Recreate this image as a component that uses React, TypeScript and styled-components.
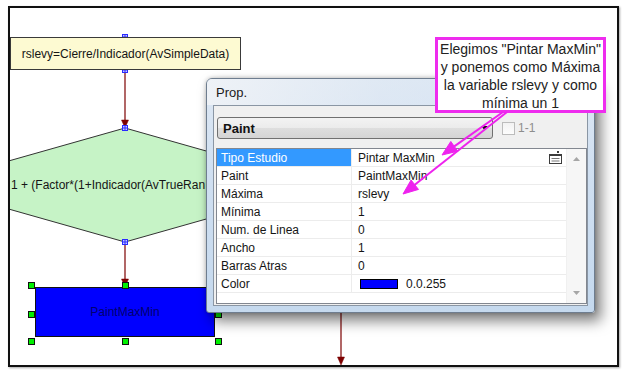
import React from 'react';
import styled, { createGlobalStyle } from 'styled-components';

const GlobalStyle = createGlobalStyle`
  html, body {
    margin: 0;
    padding: 0;
    background: #fff;
  }
  body {
    font-family: 'Liberation Sans', Arial, sans-serif;
  }
`;

const Page = styled.div`
  width: 626px;
  height: 375px;
  box-sizing: border-box;
  padding: 6px 0 0 8px;
  background: #fff;
  overflow: hidden;
`;

// the diagram canvas, its nodes sit at their own coordinates
const Frame = styled.div`
  position: relative;
  width: 611px;
  height: 361px;
  box-sizing: border-box;
  border: 2px solid #111;
  box-shadow: 1px 1px 2px rgba(0, 0, 0, 0.35);
  background: #fff;
  overflow: hidden;
`;

const Layer = styled.svg<{ $top?: boolean }>`
  position: absolute;
  left: 0;
  top: 0;
  width: 607px;
  height: 357px;
  pointer-events: none;
  z-index: ${(p) => (p.$top ? 3 : 0)};
`;

const Node = styled.div<{ $x: number; $y: number; $w: number; $h: number }>`
  position: absolute;
  left: ${(p) => p.$x}px;
  top: ${(p) => p.$y}px;
  width: ${(p) => p.$w}px;
  height: ${(p) => p.$h}px;
  box-sizing: border-box;
  display: flex;
  align-items: center;
  justify-content: center;
  font-size: 12px;
  white-space: nowrap;
  z-index: 1;
`;

const AssignNode = styled(Node)`
  background: #fdfad2;
  border: 1px solid #3a3a3a;
  color: #151515;
`;

const PaintNode = styled(Node)`
  background: #0000ff;
  border: 1px solid #111;
  color: #00006e;
`;

const DecisionLabel = styled(Node)`
  justify-content: flex-start;
  color: #151515;
`;

const Handle = styled.span<{ $x: number; $y: number }>`
  position: absolute;
  left: ${(p) => p.$x - 3}px;
  top: ${(p) => p.$y - 3}px;
  width: 7px;
  height: 7px;
  box-sizing: border-box;
  background: #00f000;
  border: 1px solid #111;
  z-index: 1;
`;

// property window
const Window = styled.div`
  position: absolute;
  left: 196px;
  top: 70px;
  width: 389px;
  height: 235px;
  box-sizing: border-box;
  display: flex;
  flex-direction: column;
  border: 1px solid #6e7d8f;
  border-radius: 6px 6px 3px 3px;
  background: linear-gradient(180deg, #dde7f3 0%, #cfdff1 45%, #c5d9ee 100%);
  box-shadow: 6px 8px 14px rgba(0, 0, 0, 0.5), 0 0 4px rgba(0, 0, 0, 0.25);
  z-index: 2;
`;

const TitleBar = styled.div`
  height: 26px;
  display: flex;
  align-items: center;
  padding: 0 9px;
  font-size: 13px;
  color: #1a1a1a;
  border-radius: 5px 5px 0 0;
  background: linear-gradient(100deg, rgba(240, 243, 247, 0.9) 0%, rgba(225, 234, 244, 0.5) 45%, rgba(200, 222, 246, 0.3) 100%);
`;

const Client = styled.div`
  flex: 1;
  margin: 0 6px 6px;
  box-sizing: border-box;
  border: 1px solid #8a96a4;
  background: #f0f0f0;
  display: flex;
  flex-direction: column;
  gap: 9px;
  padding: 11px 0 1px 2px;
`;

const Toolbar = styled.div`
  height: 22px;
  display: flex;
  align-items: center;
`;

const Select = styled.div`
  width: 276px;
  height: 22px;
  margin-left: 1px;
  box-sizing: border-box;
  border: 1px solid #707070;
  border-radius: 3px;
  background: linear-gradient(180deg, #f3f3f3 0%, #ebebeb 50%, #dedede 51%, #d4d4d4 100%);
  display: flex;
  align-items: center;
  justify-content: space-between;
  padding: 0 4px 0 5px;
  font-size: 13px;
  font-weight: bold;
  color: #111;
`;

const CheckBox = styled.span`
  width: 13px;
  height: 13px;
  margin-left: 9px;
  box-sizing: border-box;
  border: 1px solid #bcbcbc;
  background: linear-gradient(180deg, #f2f2f2, #fdfdfd);
`;

const CheckLabel = styled.span`
  margin-left: 3px;
  font-size: 12px;
  color: #8d8d8d;
`;

const PropGrid = styled.div`
  flex: 1;
  display: flex;
  border: 1px solid #828790;
  background: #fff;
`;

const Rows = styled.div`
  flex: 1;
  display: flex;
  flex-direction: column;
`;

const Row = styled.div`
  height: 18px;
  box-sizing: border-box;
  display: grid;
  grid-template-columns: 135px 1fr;
  border-bottom: 1px solid #ececec;
  font-size: 12px;
  color: #141414;
`;

const NameCell = styled.div<{ $selected?: boolean }>`
  display: flex;
  align-items: center;
  padding-left: 4px;
  border-right: 1px solid #ececec;
  background: ${(p) => (p.$selected ? '#3399ff' : 'transparent')};
  color: ${(p) => (p.$selected ? '#fff' : 'inherit')};
`;

const ValueCell = styled.div`
  display: flex;
  align-items: center;
  justify-content: space-between;
  padding: 0 4px 0 6px;
`;

const ColorValue = styled.span`
  display: flex;
  align-items: center;
  gap: 8px;
`;

const Swatch = styled.span`
  width: 38px;
  height: 10px;
  margin-left: 2px;
  box-sizing: border-box;
  border: 1px solid #000;
  background: #0000ff;
`;

const ScrollBar = styled.div`
  width: 19px;
  background: #f6f6f6;
  border-left: 1px solid #f0f0f0;
  display: flex;
  flex-direction: column;
  justify-content: space-between;
`;

const ScrollButton = styled.div`
  height: 20px;
  display: flex;
  align-items: center;
  justify-content: center;
`;

// annotation
const Callout = styled.div`
  position: absolute;
  left: 425px;
  top: 29px;
  width: 171px;
  height: 76px;
  box-sizing: border-box;
  border: 3px solid #ee2cee;
  background: #fff;
  font-size: 14px;
  line-height: 18px;
  text-align: center;
  color: #222;
  white-space: nowrap;
  z-index: 3;
`;

const rows: { name: string; value: string }[] = [
  { name: 'Tipo Estudio', value: 'Pintar MaxMin' },
  { name: 'Paint', value: 'PaintMaxMin' },
  { name: 'Máxima', value: 'rslevy' },
  { name: 'Mínima', value: '1' },
  { name: 'Num. de Linea', value: '0' },
  { name: 'Ancho', value: '1' },
  { name: 'Barras Atras', value: '0' },
  { name: 'Color', value: '0.0.255' },
];

const handles = [
  [21, 277], [115, 277], [208, 277],
  [21, 306], [208, 306],
  [21, 333], [115, 333], [208, 333],
];

const Port = ({ x, y }: { x: number; y: number }) => (
  <g stroke="#2a2aff" strokeWidth="1" fill="#c8c8ff">
    <rect x={x - 2.5} y={y - 2.5} width="5" height="5" />
    <line x1={x - 2.5} y1={y} x2={x + 2.5} y2={y} />
    <line x1={x} y1={y - 2.5} x2={x} y2={y + 2.5} />
  </g>
);

const Wire = ({ x, y1, y2 }: { x: number; y1: number; y2: number }) => (
  <g fill="#7d0000" stroke="#7d0000">
    <line x1={x} y1={y1} x2={x} y2={y2 - 6} strokeWidth="1.2" />
    <polygon points={`${x - 3.5},${y2 - 8} ${x + 3.5},${y2 - 8} ${x},${y2}`} strokeWidth="0.5" />
  </g>
);

const Pointer = ({ x1, y1, x2, y2 }: { x1: number; y1: number; x2: number; y2: number }) => {
  const dx = x2 - x1;
  const dy = y2 - y1;
  const len = Math.hypot(dx, dy);
  const ux = dx / len;
  const uy = dy / len;
  const bx = x2 - ux * 15;
  const by = y2 - uy * 15;
  const px = -uy * 6;
  const py = ux * 6;
  return (
    <g fill="#ee22ee" stroke="#ee22ee">
      <line x1={x1} y1={y1} x2={bx} y2={by} strokeWidth="2" />
      <polygon points={`${x2},${y2} ${bx + px},${by + py} ${bx - px},${by - py}`} strokeWidth="1" />
    </g>
  );
};

const ListIcon = () => (
  <svg width="13" height="13" viewBox="0 0 13 13">
    <rect x="0.5" y="3.5" width="12" height="9" fill="#fff" stroke="#3c3c3c" />
    <rect x="1" y="3" width="11" height="2" fill="#3c3c3c" />
    <rect x="8" y="0" width="2" height="2" fill="#3c3c3c" />
    <line x1="2.5" y1="7.5" x2="10.5" y2="7.5" stroke="#777" />
    <line x1="2.5" y1="10" x2="10.5" y2="10" stroke="#777" />
  </svg>
);

const Tri = ({ down }: { down?: boolean }) => (
  <svg width="7" height="4" viewBox="0 0 7 4">
    <polygon points={down ? '0,0 7,0 3.5,4' : '0,4 7,4 3.5,0'} fill="#a6a6a6" />
  </svg>
);

const PropWindow = () => (
  <Window>
    <TitleBar>Prop.</TitleBar>
    <Client>
      <Toolbar>
        <Select>
          <span>Paint</span>
          <svg width="7" height="4" viewBox="0 0 7 4">
            <polygon points="0,0 7,0 3.5,4" fill="#111" />
          </svg>
        </Select>
        <CheckBox />
        <CheckLabel>1-1</CheckLabel>
      </Toolbar>
      <PropGrid>
        <Rows>
          {rows.map((r, i) => (
            <Row key={r.name}>
              <NameCell $selected={i === 0}>{r.name}</NameCell>
              <ValueCell>
                {r.name === 'Color' ? (
                  <ColorValue>
                    <Swatch />
                    {r.value}
                  </ColorValue>
                ) : (
                  <span>{r.value}</span>
                )}
                {i === 0 && <ListIcon />}
              </ValueCell>
            </Row>
          ))}
        </Rows>
        <ScrollBar>
          <ScrollButton>
            <Tri />
          </ScrollButton>
          <ScrollButton>
            <Tri down />
          </ScrollButton>
        </ScrollBar>
      </PropGrid>
    </Client>
  </Window>
);

export default function App() {
  return (
    <>
      <GlobalStyle />
      <Page>
        <Frame>
          <Layer>
            <polygon
              points="115,120 235,154 235,200 115,234 -5,200 -5,154"
              fill="#c6f3c6"
              stroke="#333"
              strokeWidth="1"
            />
            <Wire x={115} y1={62} y2={120} />
            <Wire x={115} y1={234} y2={279} />
            <Wire x={331} y1={290} y2={357} />
            <Port x={115} y={29} />
            <Port x={115} y={62} />
            <Port x={115} y={120} />
            <Port x={115} y={234} />
          </Layer>

          <AssignNode $x={0} $y={29} $w={231} $h={33}>
            rslevy=Cierre/Indicador(AvSimpleData)
          </AssignNode>
          <DecisionLabel $x={1} $y={170} $w={194} $h={14}>
            1 + (Factor*(1+Indicador(AvTrueRan
          </DecisionLabel>
          <PaintNode $x={25} $y={279} $w={180} $h={50}>
            PaintMaxMin
          </PaintNode>
          {handles.map(([x, y]) => (
            <Handle key={`${x}-${y}`} $x={x} $y={y} />
          ))}

          <PropWindow />

          <Callout>
            Elegimos "Pintar MaxMin"
            <br />
            y ponemos como Máxima
            <br />
            la variable rslevy y como
            <br />
            mínima un 1
          </Callout>
          <Layer $top>
            <Pointer x1={493} y1={104} x2={432} y2={147} />
            <Pointer x1={497} y1={104} x2={393} y2={186} />
          </Layer>
        </Frame>
      </Page>
    </>
  );
}
